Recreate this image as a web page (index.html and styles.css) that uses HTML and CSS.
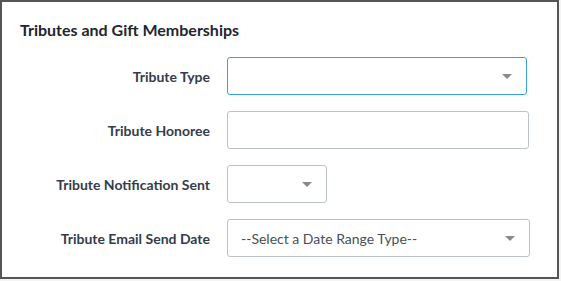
FILE: index.html
```html
<!DOCTYPE html>
<html>
<head>
<meta charset="utf-8">
<link rel="stylesheet" href="styles.css">
</head>
<body>
<div class="panel">
  <h2 class="title">Tributes and Gift Memberships</h2>
  <div class="form">
    <label class="label">Tribute Type</label>
    <div class="field select focused w-full">
      <span class="value"></span>
      <svg class="caret" width="10" height="5" viewBox="0 0 10 5"><path d="M0 0H10L5 5Z" fill="#8a8a8a"/></svg>
    </div>

    <label class="label">Tribute Honoree</label>
    <div class="field w-honoree"></div>

    <label class="label">Tribute Notification Sent</label>
    <div class="field select w-small">
      <span class="value"></span>
      <svg class="caret" width="10" height="5" viewBox="0 0 10 5"><path d="M0 0H10L5 5Z" fill="#8a8a8a"/></svg>
    </div>

    <label class="label">Tribute Email Send Date</label>
    <div class="field select w-date">
      <span class="value">--Select a Date Range Type--</span>
      <svg class="caret" width="10" height="5" viewBox="0 0 10 5"><path d="M0 0H10L5 5Z" fill="#8a8a8a"/></svg>
    </div>
  </div>
</div>
</body>
</html>
```
FILE: styles.css
```css
* { box-sizing: border-box; }
html, body {
  margin: 0;
  padding: 0;
  background: #f4f4f4;
}
body {
  font-family: Lato, "Open Sans", sans-serif;
  width: 561px;
  height: 281px;
}
.panel {
  width: 559px;
  height: 279px;
  background: #fff;
  border: 2px solid #555;
  padding: 18px 0 0 18px;
}
.title {
  margin: 0;
  font-size: 16px;
  line-height: 20px;
  font-weight: 700;
  color: #1f2530;
}
.form {
  margin-top: 17px;
  display: grid;
  grid-template-columns: 190px auto;
  column-gap: 17px;
  row-gap: 16px;
  justify-content: start;
}
.label {
  justify-self: end;
  align-self: center;
  font-size: 14px;
  font-weight: 700;
  color: #343c4c;
  line-height: 17px;
}
.field {
  height: 38px;
  border: 1px solid #bcc2cc;
  border-radius: 3px;
  background: #fff;
  display: flex;
  align-items: center;
  padding: 0 14px 0 13px;
}
.focused { border-color: #3b9fd9; }
.value {
  font-size: 14px;
  color: #4a4f57;
}
.caret {
  margin-left: auto;
  display: block;
}
.w-full { width: 300px; }
.w-honoree { width: 302px; }
.w-small { width: 100px; }
.w-date { width: 303px; }
```
